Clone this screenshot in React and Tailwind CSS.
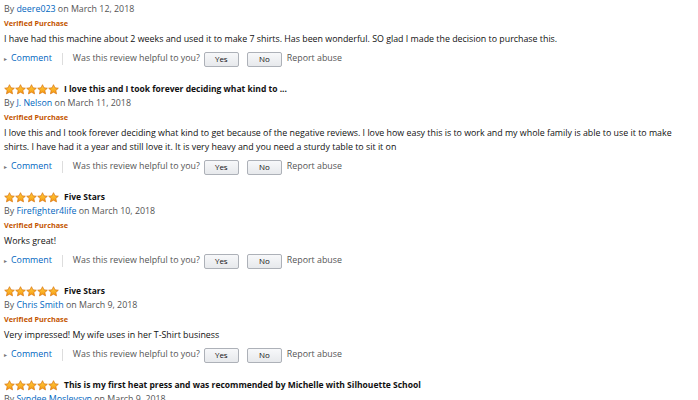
import React from 'react';

const reviews = [
    {
        title: null,
        author: 'deere023',
        date: 'March 12, 2018',
        body: 'I have had this machine about 2 weeks and used it to make 7 shirts. Has been wonderful. SO glad I made the decision to purchase this.',
    },
    {
        title: 'I love this and I took forever deciding what kind to ...',
        author: 'J. Nelson',
        date: 'March 11, 2018',
        body: 'I love this and I took forever deciding what kind to get because of the negative reviews. I love how easy this is to work and my whole family is able to use it to make shirts. I have had it a year and still love it. It is very heavy and you need a sturdy table to sit it on',
    },
    {
        title: 'Five Stars',
        author: 'Firefighter4life',
        date: 'March 10, 2018',
        body: 'Works great!',
    },
    {
        title: 'Five Stars',
        author: 'Chris Smith',
        date: 'March 9, 2018',
        body: 'Very impressed! My wife uses in her T-Shirt business',
    },
    {
        title: 'This is my first heat press and was recommended by Michelle with Silhouette School',
        author: 'Syndee Mosleysyn',
        date: 'March 9, 2018',
        body: null,
    },
];

const Star = () => (
    <svg width="11" height="11" viewBox="0 0 24 24" className="block">
        <defs>
            <linearGradient id="starGrad" x1="0" y1="0" x2="0" y2="1">
                <stop offset="0%" stopColor="#ffce3d" />
                <stop offset="100%" stopColor="#f79a13" />
            </linearGradient>
        </defs>
        <path
            d="M12 1.5l3.2 6.9 7.3.8-5.5 5 1.6 7.3L12 17.8l-6.6 3.7 1.6-7.3-5.5-5 7.3-.8z"
            fill="url(#starGrad)"
            stroke="#d9730d"
            strokeWidth="1.6"
            strokeLinejoin="round"
        />
    </svg>
);

const Stars = () => (
    <div className="flex gap-0">
        {[0, 1, 2, 3, 4].map((i) => (
            <Star key={i} />
        ))}
    </div>
);

const VoteButton = ({ label }) => (
    <button className="h-[15px] w-[35px] rounded-[2px] border border-[#adb1b8] bg-gradient-to-b from-[#f7f8fa] to-[#e7e9ec] text-[8px] leading-none text-[#111]">
        {label}
    </button>
);

const Review = ({ review, first }) => (
    <div className={first ? 'pt-[2px] pb-[15px]' : 'pb-[15px]'}>
        {review.title && (
            <div className="flex h-[14px] items-center gap-[5px]">
                <Stars />
                <span className="text-[8.5px] font-bold text-[#111]">{review.title}</span>
            </div>
        )}
        <div className="h-[14px] leading-[14px] text-[#555]">
            By <span className="text-[#0066c0]">{review.author}</span> on {review.date}
        </div>
        {review.body && (
            <>
                <div className="h-[14px] text-[7.3px] font-bold leading-[14px] text-[#c45500]">Verified Purchase</div>
                <p className="mt-[2px] leading-[14px] text-[#111]">{review.body}</p>
                <div className="mt-[5px] flex h-[16px] items-center text-[#555]">
                    <span className="mr-[4px] text-[6px] text-[#777]">▸</span>
                    <span className="text-[#0066c0]">Comment</span>
                    <span className="mx-[10px] h-[12px] w-px bg-[#ddd]" />
                    <span>Was this review helpful to you?</span>
                    <span className="ml-[4px] flex gap-[8px]">
                        <VoteButton label="Yes" />
                        <VoteButton label="No" />
                    </span>
                    <span className="ml-[5px]">Report abuse</span>
                </div>
            </>
        )}
    </div>
);

const App = () => {
    return (
        <div className="h-[400px] w-[698px] overflow-hidden bg-white pl-[4px] pr-[2px] font-['Open_Sans',sans-serif] text-[8.85px]">
            {reviews.map((review, index) => (
                <Review key={index} review={review} first={index === 0} />
            ))}
        </div>
    );
};

export default App;
